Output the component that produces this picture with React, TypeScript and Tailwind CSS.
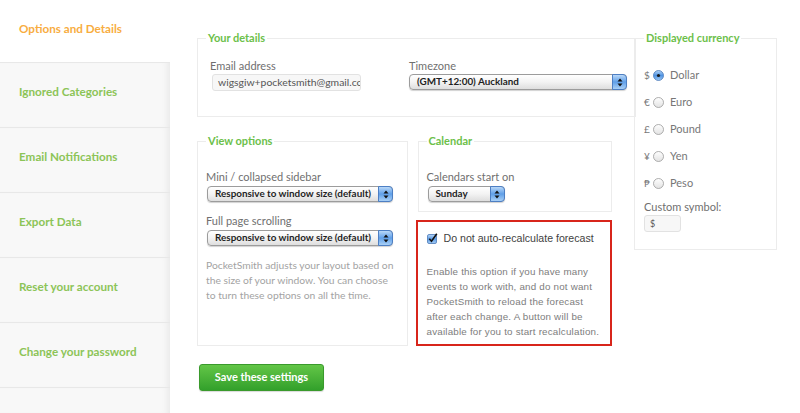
import React from "react";

const sideItems = [
  "Ignored Categories",
  "Email Notifications",
  "Export Data",
  "Reset your account",
  "Change your password",
];

function Stepper() {
  return (
    <div className="absolute right-[-1px] top-[-1px] bottom-[-1px] flex w-[15px] items-center justify-center rounded-r-[4px] border border-[#4d7fc4] bg-gradient-to-b from-[#b9d8f8] via-[#5f9fe8] to-[#a9d0f6]">
      <svg width="6" height="9" viewBox="0 0 6 9">
        <path d="M3 0.5 L5.5 3.5 L0.5 3.5 Z" fill="#111" />
        <path d="M3 8.5 L5.5 5.5 L0.5 5.5 Z" fill="#111" />
      </svg>
    </div>
  );
}

function AquaSelect({ text, cls }: { text: string; cls: string }) {
  return (
    <div
      className={`relative flex h-[16px] items-center rounded-[4px] border border-[#9c9c9c] bg-gradient-to-b from-white via-[#f3f3f3] to-[#dedede] shadow-[0_1px_1px_rgba(0,0,0,0.18)] ${cls}`}
    >
      <span className="whitespace-nowrap pl-[7px] font-['Lato',sans-serif] text-[9.9px] font-bold leading-none text-[#1f1f1f]">
        {text}
      </span>
      <Stepper />
    </div>
  );
}

function Radio({ on }: { on?: boolean }) {
  return on ? (
    <svg width="11" height="11" viewBox="0 0 11 11">
      <defs>
        <linearGradient id="rb" x1="0" y1="0" x2="0" y2="1">
          <stop offset="0" stopColor="#b6d6f7" />
          <stop offset="0.5" stopColor="#4f93e3" />
          <stop offset="1" stopColor="#9fcaf5" />
        </linearGradient>
      </defs>
      <circle cx="5.5" cy="5.5" r="5" fill="url(#rb)" stroke="#4a78b8" strokeWidth="0.8" />
      <circle cx="5.5" cy="5.5" r="1.6" fill="#1a1a1a" />
    </svg>
  ) : (
    <svg width="11" height="11" viewBox="0 0 11 11">
      <defs>
        <linearGradient id="rg" x1="0" y1="0" x2="0" y2="1">
          <stop offset="0" stopColor="#ffffff" />
          <stop offset="1" stopColor="#e2e2e2" />
        </linearGradient>
      </defs>
      <circle cx="5.5" cy="5.5" r="5" fill="url(#rg)" stroke="#9a9a9a" strokeWidth="0.8" />
    </svg>
  );
}

const currencies = [
  { s: "$", n: "Dollar", on: true },
  { s: "€", n: "Euro" },
  { s: "£", n: "Pound" },
  { s: "¥", n: "Yen" },
  { s: "₱", n: "Peso" },
];

export default function App() {
  return (
    <div className="flex h-[413px] w-[800px] overflow-hidden bg-white font-['Lato',sans-serif]">
      {/* Sidebar */}
      <aside className="flex w-[170px] shrink-0 flex-col">
        <div className="flex h-[62px] items-center pb-[5px] pl-[19px] text-[11.7px] font-bold text-[#f8ad3f]">
          Options and Details
        </div>
        {sideItems.map((t) => (
          <div
            key={t}
            className="flex h-[65px] items-center border-t border-[#e8e8e8] bg-[#f8f8f8] pb-[6px] pl-[19px] text-[11.7px] font-bold text-[#8cc457] shadow-[inset_-7px_0_7px_-5px_rgba(0,0,0,0.07)]"
          >
            {t}
          </div>
        ))}
        <div className="flex-1 border-t border-[#e8e8e8] bg-[#f8f8f8] shadow-[inset_-7px_0_7px_-5px_rgba(0,0,0,0.07)]" />
      </aside>

      {/* Main */}
      <main className="flex gap-[22px] pl-[27px] pt-[31px]">
        <div className="flex w-[415px] flex-col">
          {/* Your details */}
          <fieldset className="h-[86px] border border-[#ececec] px-[8px]">
            <legend className="px-[2px] text-[11px] font-bold leading-[14px] text-[#6cc04a]">
              Your details
            </legend>
            <div className="flex pl-[4px] pt-[15px]">
              <div className="w-[199px]">
                <div className="text-[11px] leading-[12px] text-[#6f6f6f]">Email address</div>
                <div className="mt-[2px] ml-[2px] flex h-[17px] w-[149px] items-center overflow-hidden rounded-[3px] border border-[#e2e2e2] bg-[#f7f7f7] pl-[5px]">
                  <span className="whitespace-nowrap text-[10.4px] text-[#555]">
                    wigsgiw+pocketsmith@gmail.com
                  </span>
                </div>
              </div>
              <div>
                <div className="text-[11px] leading-[12px] text-[#6f6f6f]">Timezone</div>
                <AquaSelect text="(GMT+12:00) Auckland" cls="mt-[2px] w-[218px]" />
              </div>
            </div>
          </fieldset>

          <div className="mt-[17px] flex gap-[10px]">
            {/* View options */}
            <fieldset className="h-[212px] w-[211px] border border-[#ececec] pl-[8px] pr-[2px]">
              <legend className="px-[2px] text-[11px] font-bold leading-[14px] text-[#6cc04a]">
                View options
              </legend>
              <div className="pt-[23px]">
                <div className="text-[11px] leading-[12px] text-[#6f6f6f]">Mini / collapsed sidebar</div>
                <AquaSelect text="Responsive to window size (default)" cls="mt-[3px] ml-[1px] w-[186px]" />
                <div className="mt-[13px] text-[11px] leading-[12px] text-[#6f6f6f]">Full page scrolling</div>
                <AquaSelect text="Responsive to window size (default)" cls="mt-[3px] ml-[1px] w-[186px]" />
                <p className="mt-[12px] whitespace-nowrap text-[10.3px] leading-[15px] text-[#a3a3a3]">
                  PocketSmith adjusts your layout based on
                  <br />
                  the size of your window. You can choose
                  <br />
                  to turn these options on all the time.
                </p>
              </div>
            </fieldset>

            <div className="flex w-[195px] flex-col">
              {/* Calendar */}
              <fieldset className="h-[78px] border border-[#ececec] px-[8px]">
                <legend className="px-[2px] text-[11px] font-bold leading-[14px] text-[#6cc04a]">
                  Calendar
                </legend>
                <div className="pt-[23px]">
                  <div className="text-[11px] leading-[12px] text-[#6f6f6f]">Calendars start on</div>
                  <AquaSelect text="Sunday" cls="mt-[3px] ml-[1px] w-[77px]" />
                </div>
              </fieldset>

              {/* Red box */}
              <div className="ml-[-2px] mt-[8px] h-[126px] w-[196px] border-2 border-[#d8251b] pl-[9px] pr-[4px] pt-[9px]">
                <div className="flex items-center gap-[6px]">
                  <svg width="11" height="11" viewBox="0 0 11 11">
                    <defs>
                      <linearGradient id="cb" x1="0" y1="0" x2="0" y2="1">
                        <stop offset="0" stopColor="#bcd9f8" />
                        <stop offset="0.5" stopColor="#5b9be5" />
                        <stop offset="1" stopColor="#a6cdf5" />
                      </linearGradient>
                    </defs>
                    <rect x="0.5" y="1.5" width="9" height="9" rx="1.5" fill="url(#cb)" stroke="#4a78b8" strokeWidth="0.8" />
                    <path d="M2.3 5.8 L4.5 8.3 L9.8 0.8" fill="none" stroke="#111" strokeWidth="1.6" />
                  </svg>
                  <span className="whitespace-nowrap font-['Liberation_Sans',sans-serif] text-[10.6px] text-[#3f3f3f]">
                    Do not auto-recalculate forecast
                  </span>
                </div>
                <p className="mt-[17px] w-[176px] font-['Liberation_Sans',sans-serif] text-[9.8px] leading-[15px] tracking-[0.2px] text-[#7d7d7d]">
                  Enable this option if you have many events to work with, and do not want PocketSmith to reload the forecast after each change. A button will be available for you to start recalculation.
                </p>
              </div>
            </div>
          </div>

          <button className="mt-[18px] ml-[2px] flex h-[27px] w-[125px] items-center justify-center rounded-[3px] border border-[#3a9a2c] bg-gradient-to-b from-[#62c647] to-[#32a02b] text-[11px] font-bold text-white shadow-[0_1px_1px_rgba(0,0,0,0.15)]">
            Save these settings
          </button>
        </div>

        {/* Displayed currency */}
        <fieldset className="h-[219px] w-[143px] border border-[#ececec] px-[9px]">
          <legend className="px-[2px] text-[11px] font-bold leading-[14px] text-[#6cc04a]">
            Displayed currency
          </legend>
          <div className="flex flex-col gap-[13px] pt-[23px]">
            {currencies.map((c) => (
              <div key={c.n} className="flex h-[14px] items-center text-[11px] text-[#777]">
                <span className="w-[9px] text-[10px]">{c.s}</span>
                <Radio on={c.on} />
                <span className="ml-[6px]">{c.n}</span>
              </div>
            ))}
          </div>
          <div className="mt-[11px] text-[11px] leading-[12px] text-[#6f6f6f]">Custom symbol:</div>
          <div className="mt-[2px] flex h-[17px] w-[37px] items-center rounded-[3px] border border-[#e2e2e2] bg-[#f7f7f7] pl-[5px] text-[9px] text-[#555]">
            $
          </div>
        </fieldset>
      </main>
    </div>
  );
}
